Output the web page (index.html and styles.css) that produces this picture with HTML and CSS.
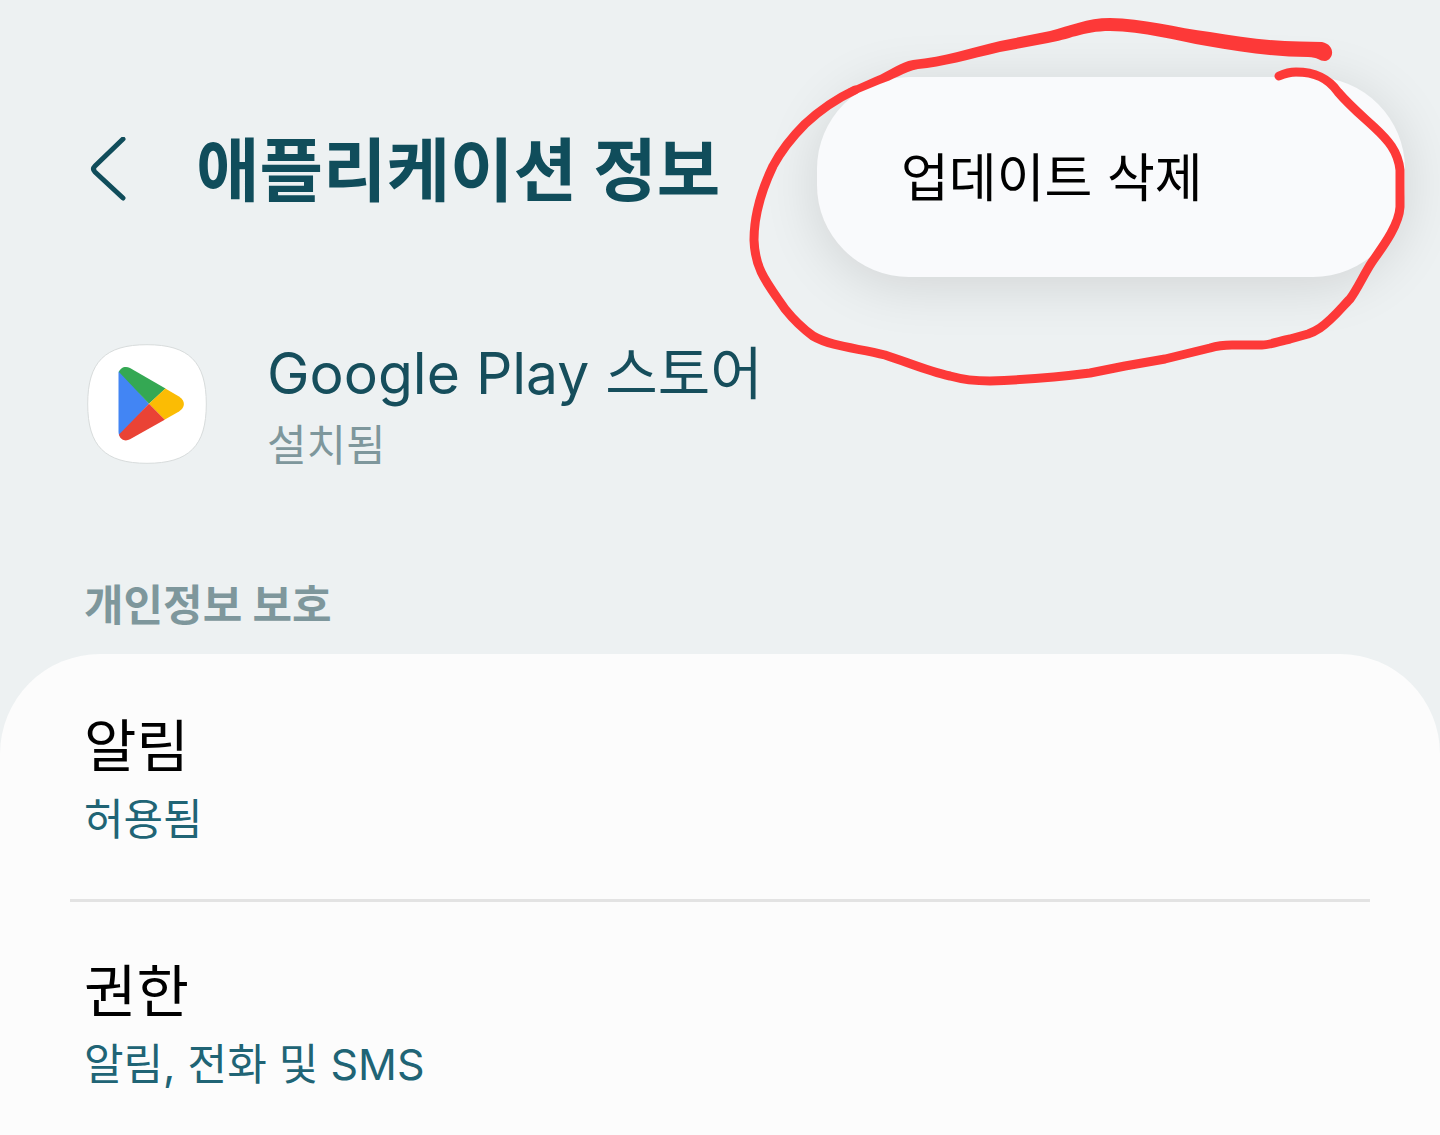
FILE: index.html
```
<!DOCTYPE html>
<html lang="ko">
<head>
    <meta charset="UTF-8">
    <meta name="viewport" content="width=device-width, initial-scale=1.0">
    <title>애플리케이션 정보</title>
    <link rel="stylesheet" href="styles.css">
</head>
<body>

    <header class="top-bar">
        <button class="back-btn" type="button" aria-label="뒤로">
            <svg width="40" height="68" viewBox="0 0 40 68" aria-hidden="true">
                <path d="M35 2 L7 29 Q4 32 7 35 L35 61"/>
            </svg>
        </button>
        <h1>애플리케이션 정보</h1>
    </header>

    <!-- Overflow menu -->
    <div class="menu">
        <button class="menu-item" type="button">업데이트 삭제</button>
    </div>

    <main>
        <section class="app">
            <svg class="app-icon" viewBox="0 0 120 120" aria-hidden="true">
                <path class="icon-bg" d="M60 .7 C102 .7 119.300 18 119.300 60 S102 119.300 60 119.300 .7 102 .7 60 18 .7 60 .7Z"/>
                <path fill="#4285f4" d="M31.500 28 L32.500 26.500 L62 59.700 L32.500 92 Q31.500 90.500 31.500 88Z"/>
                <path fill="#34a853" d="M32 28 C33 24 38 21.500 43 24 L78.500 44.500 L62 59.700Z"/>
                <path fill="#fbbc04" d="M78.300 44.400 L92 52.500 C98.500 56.500 98.500 63.500 92 67.500 L77.500 75.800 L62 59.700Z"/>
                <path fill="#ea4335" d="M62 59.700 L77.700 75.700 L43 95.300 C38 98 33 95.500 32 90.500Z"/>
            </svg>
            <div>
                <h2 class="app-name">Google Play 스토어</h2>
                <p class="app-status">설치됨</p>
            </div>
        </section>

        <h2 class="section-title">개인정보 보호</h2>
        <div class="card">
            <a class="row" href="#notifications">
                <span class="row-title">알림</span>
                <span class="row-value">허용됨</span>
            </a>
            <a class="row" href="#permissions">
                <span class="row-title">권한</span>
                <span class="row-value">알림, 전화 및 SMS</span>
            </a>
        </div>
    </main>

    <!-- Hand-drawn circle around the menu -->
    <svg class="scribble" width="700" height="400" viewBox="740 0 700 400" aria-hidden="true">
        <path class="pen" d="M855 90 C838 98 820 110 805 124 C791 138 781 151 773 166 C763 187 754 212 754 240 C755 270 767 283 785 309 C793 319 802 328 813 336 C832 347 858 348 885 355 C907 362 927 371 950 376 Q968 381 990 381 Q1043 379 1090 373 L1125 366 L1165 359 L1210 348 Q1220 345 1232 345 L1262 345 C1270 345 1280 341 1290 339 L1308 334 Q1314 332 1320 328 C1333 319 1342 307 1350 299 C1358 288 1364 274 1372 262 C1381 249 1399 226 1400 207 L1400 170 C1398 151 1388 140 1374 127 C1361 115 1350 106 1338 92 C1328 78 1315 72 1296 72 Q1288 72 1279 76"/>
        <path class="pen-fill" d="M848 89 L875 77 C890 71 900 62 913 60 C945 57 970 48 1000 41 L1050 31 C1070 26 1087 18 1110 18 C1142 18 1177 28 1210 32 C1240 37 1268 41 1300 41.500 L1322 42 C1336 45 1334 60 1325 61 C1319 61 1318 57 1308 57 C1274 57 1240 52 1207 46 C1177 41 1143 31 1110 31 C1083 31 1068 40 1048 43 L1000 52 C970 59 942 67 918 69 C904 72 893 80 880 84 L851 96Z"/>
    </svg>

</body>
</html>
```
FILE: styles.css
```
/* Basic Layout */
* {
    box-sizing: border-box;
}

body {
    font-family: Inter, "Noto Sans CJK KR", sans-serif;
    margin: 0;
    min-height: 100vh;
    display: flex;
    flex-direction: column;
    position: relative;
    background: #edf1f2;
    color: #000;
}

h1, h2, p {
    margin: 0;
}

button {
    font-family: inherit;
    background: none;
    border: none;
    padding: 0;
    cursor: pointer;
}

main {
    flex: 1;
    display: flex;
    flex-direction: column;
}

/* Top Bar */
.top-bar {
    display: flex;
    align-items: center;
    gap: 68px;
    padding: 121px 88px 0;
}

.back-btn {
    display: flex;
}

.back-btn svg {
    fill: none;
    stroke: #104d5b;
    stroke-width: 5;
    stroke-linecap: round;
}

.top-bar h1 {
    font-size: 69px;
    line-height: 100px;
    color: #104d5b;
}

/* Menu */
.menu {
    position: absolute;
    top: 77px;
    right: 35px;
    width: 588px;
    background: #f9fafc;
    border-radius: 92px;
    box-shadow: 0 8px 56px rgba(0, 0, 0, 0.12);
}

.menu-item {
    width: 100%;
    padding: 62px 84px 58px;
    font-size: 52px;
    line-height: 80px;
    text-align: left;
    color: #000;
}

/* App Summary */
.app {
    display: flex;
    align-items: center;
    gap: 60px;
    padding: 112px 87px 100px;
}

.app-icon {
    width: 120px;
    height: 120px;
}

.icon-bg {
    fill: #fff;
    stroke: #d8dcdc;
}

.app-name {
    font-size: 57px;
    line-height: 82px;
    font-weight: 400;
    color: #164e5c;
}

.app-status {
    font-size: 43px;
    line-height: 60px;
    color: #7e979c;
}

/* Settings List */
.section-title {
    padding: 0 84px 19px;
    font-size: 43px;
    line-height: 60px;
    color: #7e979c;
}

.card {
    flex: 1;
    background: #fcfcfc;
    border-radius: 100px 100px 0 0;
    padding: 3px 70px 0;
}

.row {
    display: flex;
    flex-direction: column;
    gap: 2px;
    padding: 50px 14px;
    text-decoration: none;
}

.row + .row {
    border-top: 3px solid #e3e3e3;
}

.row-title {
    font-size: 57px;
    line-height: 80px;
    color: #000;
}

.row-value {
    font-size: 43px;
    line-height: 60px;
    color: #206475;
}

/* Pen Marks */
.scribble {
    position: absolute;
    top: 0;
    right: 0;
    pointer-events: none;
}

.pen {
    fill: none;
    stroke: #fd3938;
    stroke-width: 9;
    stroke-linecap: round;
    stroke-linejoin: round;
}

.pen-fill {
    fill: #fd3938;
}
```
